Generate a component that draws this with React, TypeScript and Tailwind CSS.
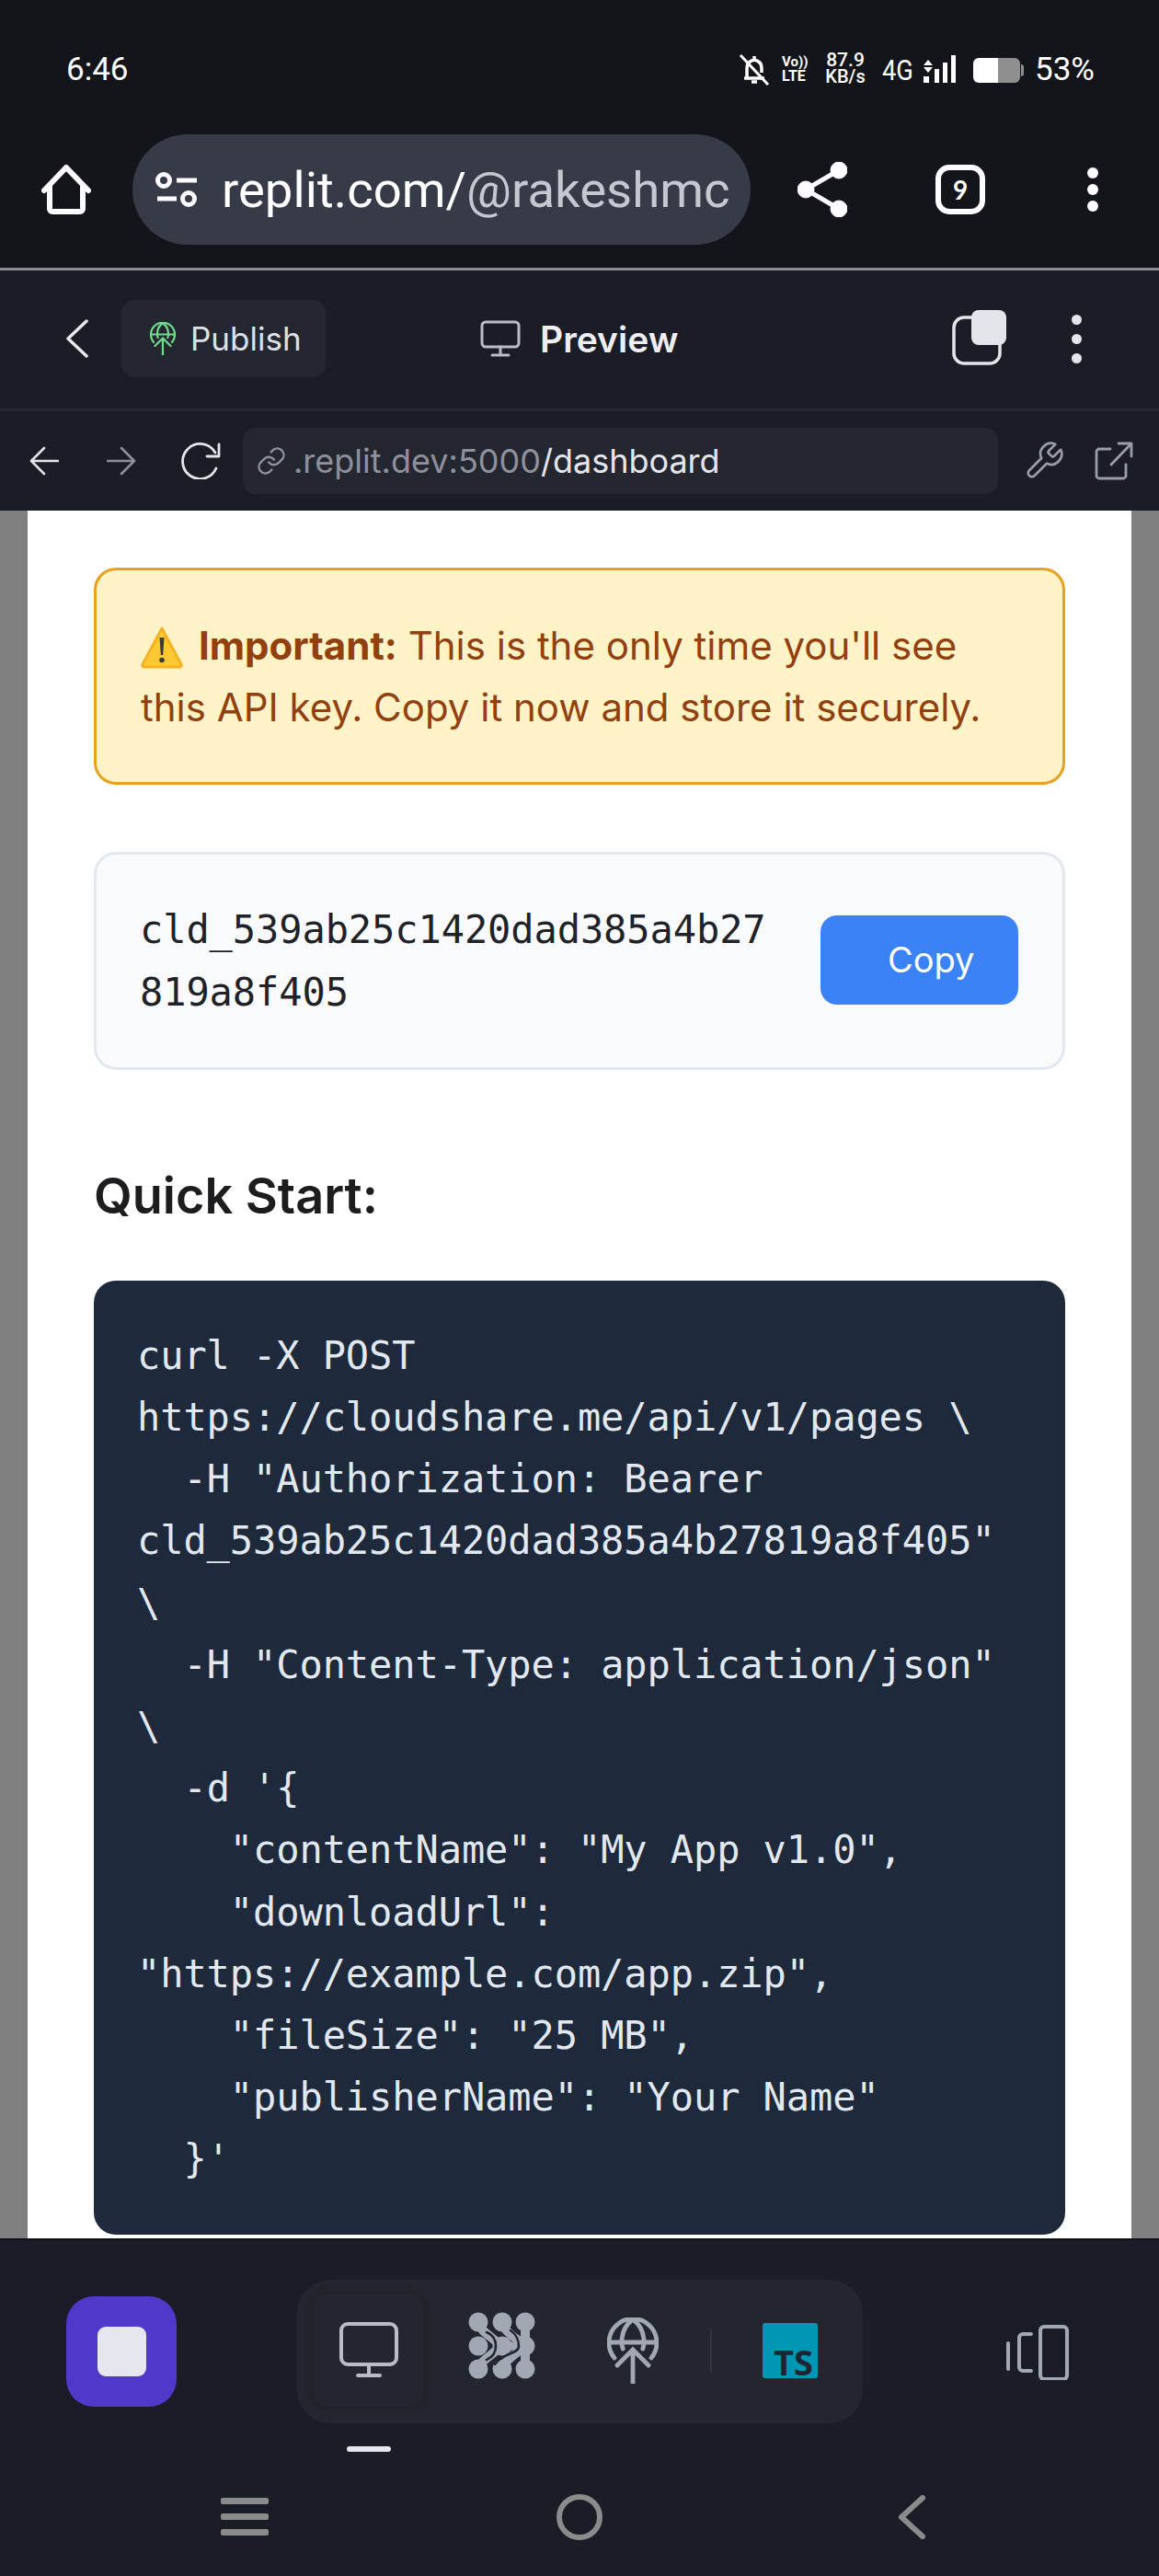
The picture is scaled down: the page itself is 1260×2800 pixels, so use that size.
const INTER = "font-['Inter','Liberation_Sans',sans-serif]";

const CODE = `curl -X POST https://cloudshare.me/api/v1/pages \\
  -H "Authorization: Bearer cld_539ab25c1420dad385a4b27819a8f405" \\
  -H "Content-Type: application/json" \\
  -d '{
    "contentName": "My App v1.0",
    "downloadUrl": "https://example.com/app.zip",
    "fileSize": "25 MB",
    "publisherName": "Your Name"
  }'`;

function StatusBar() {
  return (
    <div className="flex h-[145px] items-start pl-[72px] pt-[56px] font-['Roboto',sans-serif] text-white">
      <span className="mt-[1px] w-[70px] text-[35px] leading-[38px]">6:46</span>
      <svg viewBox="0 0 34 36" className="ml-[661px] mt-[2px] h-[36px] w-[34px]" fill="none" stroke="#fff" strokeWidth="3.5">
        <path d="M6 27h22M9 27V16c0-5 3-8 8-9 5 1 8 4 8 9v5M17 3v3M14 31h6" />
        <path d="M2 2l30 32" strokeWidth="3" />
      </svg>
      <div className="ml-[13px] mt-[3px] flex w-[30px] flex-col font-bold">
        <span className="text-[15px] leading-[16px]">Vo))</span>
        <span className="text-[16px] leading-[15px]">LTE</span>
      </div>
      <div className="ml-[16px] flex w-[46px] flex-col items-center text-[21px] font-medium leading-[18px]">
        <span>87.9</span>
        <span className="text-[20px]">KB/s</span>
      </div>
      <span className="ml-[17px] mt-[2px] w-[35px] origin-left scale-x-[0.85] text-[32px] leading-[36px]">4G</span>
      <svg viewBox="0 0 36 32" className="ml-[9px] mt-[3px] h-[32px] w-[36px]" fill="#fff">
        <path d="M6 6l5 6H1zM6 20l-5-6h10z" />
        <rect x="1" y="24" width="6" height="7" />
        <rect x="13" y="16" width="5" height="15" />
        <rect x="22" y="9" width="5" height="22" />
        <rect x="31" y="1" width="5" height="30" />
      </svg>
      <div className="ml-[19px] mt-[7px] flex h-[27px] w-[51px] overflow-hidden rounded-[6px]">
        <div className="w-[27px] bg-white" />
        <div className="flex-1 bg-[#8f8f8f]" />
      </div>
      <div className="ml-[1px] mt-[14px] h-[13px] w-[3px] rounded-r-sm bg-[#8f8f8f]" />
      <span className="ml-[12px] mt-[2px] text-[35px] leading-[36px]">53%</span>
    </div>
  );
}

function ChromeRow() {
  return (
    <div className="flex h-[146px] items-center pb-[24px] text-white">
      <svg viewBox="0 0 54 54" className="ml-[45px] h-[54px] w-[54px]" fill="none" stroke="#fdfbff" strokeWidth="6" strokeLinecap="round" strokeLinejoin="round">
        <path d="M3 28L27 3l24 25" />
        <path d="M9 24v24a3 3 0 0 0 3 3h30a3 3 0 0 0 3-3V24" />
      </svg>
      <div className="ml-[45px] flex h-[120px] w-[672px] items-center overflow-hidden rounded-[60px] bg-[#373a47] pl-[25px]">
        <svg viewBox="0 0 46 38" className="h-[38px] w-[46px] shrink-0" fill="none" stroke="#fdfbff" strokeWidth="5">
          <circle cx="9" cy="9" r="6.5" />
          <circle cx="36" cy="29" r="6.5" />
          <path d="M23 9h22M2 29h21" />
        </svg>
        <div className="ml-[26px] w-[555px] overflow-hidden whitespace-nowrap font-['Roboto',sans-serif] text-[54.5px] leading-[70px]">
          replit.com/<span className="text-[#c6c8d1]">@rakeshmc</span>
        </div>
      </div>
      <svg viewBox="0 0 54 60" className="ml-[51px] h-[60px] w-[54px]" fill="#fdfbff" stroke="#fdfbff">
        <path d="M45 9L9 30l36 21" fill="none" strokeWidth="5" />
        <circle cx="45" cy="9" r="9" />
        <circle cx="9" cy="30" r="9" />
        <circle cx="45" cy="51" r="9" />
      </svg>
      <div className="ml-[96px] flex h-[54px] w-[54px] items-center justify-center rounded-[15px] border-[6px] border-[#fdfbff] font-['Lato',sans-serif] text-[28px] font-bold leading-none">
        9
      </div>
      <Dots className="ml-[111px]" size={12} gap={6} color="bg-[#fdfbff]" />
    </div>
  );
}

function Dots({ className, size, gap, color }: { className: string; size: number; gap: number; color: string }) {
  return (
    <div className={`flex flex-col ${className}`} style={{ gap }}>
      {[0, 1, 2].map((i) => (
        <div key={i} className={`rounded-full ${color}`} style={{ width: size, height: size }} />
      ))}
    </div>
  );
}

function ReplitHeader() {
  return (
    <div className={`flex h-[150px] items-center pb-[2px] text-[#e8e8ee] ${INTER}`}>
      <svg viewBox="0 0 24 42" className="ml-[72px] h-[42px] w-[24px]" fill="none" stroke="#e8e8ee" strokeWidth="3.5" strokeLinecap="round" strokeLinejoin="round">
        <path d="M22 2L2 21l20 19" />
      </svg>
      <div className="ml-[36px] flex h-[84px] w-[222px] items-center rounded-[14px] bg-[#24272f] pl-[31px]">
        <GlobeUp className="h-[36px] w-[28px]" color="#6fdc8c" width={2.2} />
        <span className="ml-[16px] text-[35px] leading-none text-[#dfe0e6]">Publish</span>
      </div>
      <svg viewBox="0 0 44 40" className="ml-[168px] h-[40px] w-[44px]" fill="none" stroke="#b9bcc6" strokeWidth="3" strokeLinecap="round">
        <rect x="2" y="2" width="40" height="27" rx="4" />
        <path d="M22 29v8M13 38h18" />
      </svg>
      <span className="ml-[21px] text-[39px] font-semibold leading-none text-[#eeeef3]">Preview</span>
      <svg viewBox="0 0 60 60" className="ml-[298px] mt-[-2px] h-[60px] w-[60px]" fill="none">
        <rect x="2" y="8" width="50" height="50" rx="11" stroke="#e4e5ea" strokeWidth="3.5" />
        <rect x="21" y="0" width="38" height="38" rx="8" fill="#e4e5ea" />
      </svg>
      <Dots className="ml-[70px]" size={11} gap={10} color="bg-[#e4e5ea]" />
    </div>
  );
}

function GlobeUp({ className, color, width }: { className: string; color: string; width: number }) {
  return (
    <svg viewBox="0 0 28 36" className={className} fill="none" stroke={color} strokeWidth={width} strokeLinecap="round">
      <path d="M4 22a13 13 0 1 1 20 0" />
      <path d="M1 13.500h26M14 1c-4 3-6 7.500-6 12 0 1.500.2 3 .6 4M14 1c4 3 6 7.500 6 12 0 1.500-.2 3-.6 4" />
      <path d="M14 35.500V17.500M5.500 26l8.500-8.500 8.500 8.500" />
    </svg>
  );
}

function UrlRow() {
  return (
    <div className={`flex h-[108px] items-center ${INTER}`}>
      <svg viewBox="0 0 32 32" className="ml-[32px] h-[32px] w-[32px]" fill="none" stroke="#e4e5ea" strokeWidth="2.6" strokeLinecap="round" strokeLinejoin="round">
        <path d="M31 16H2M16 2L2 16l14 14" />
      </svg>
      <svg viewBox="0 0 32 32" className="ml-[52px] h-[32px] w-[32px]" fill="none" stroke="#8d909b" strokeWidth="2.6" strokeLinecap="round" strokeLinejoin="round">
        <path d="M1 16h29M16 2l14 14-14 14" />
      </svg>
      <svg viewBox="0 0 44 40" className="ml-[48px] h-[40px] w-[44px]" fill="none" stroke="#e4e5ea" strokeWidth="2.8" strokeLinecap="round" strokeLinejoin="round">
        <path d="M39 28a19 19 0 1 1-1-17" />
        <path d="M42 2v13H29" />
      </svg>
      <div className="ml-[24px] flex h-[72px] w-[821px] items-center rounded-[14px] bg-[#24272f] pl-[14px]">
        <svg viewBox="0 0 24 24" className="h-[34px] w-[34px]" fill="none" stroke="#8d909b" strokeWidth="1.7" strokeLinecap="round" strokeLinejoin="round">
          <path d="M10 13a5 5 0 0 0 7.500.5l3-3a5 5 0 0 0-7-7l-1.700 1.700" />
          <path d="M14 11a5 5 0 0 0-7.500-.5l-3 3a5 5 0 0 0 7 7l1.700-1.700" />
        </svg>
        <span className="ml-[7px] text-[36px] leading-none text-[#8e919d]">
          .replit.dev:5000<span className="text-[#e5e5ec]">/dashboard</span>
        </span>
      </div>
      <svg viewBox="0 0 24 24" className="ml-[27px] h-[46px] w-[46px]" fill="none" stroke="#9a9da8" strokeWidth="1.400" strokeLinecap="round" strokeLinejoin="round">
        <path d="M14.700 6.300a1 1 0 0 0 0 1.400l1.600 1.600a1 1 0 0 0 1.400 0l3.770-3.770a6 6 0 0 1-7.940 7.940l-6.910 6.910a2.120 2.120 0 0 1-3-3l6.910-6.910a6 6 0 0 1 7.940-7.940l-3.760 3.760z" />
      </svg>
      <svg viewBox="0 0 42 42" className="ml-[32px] h-[42px] w-[42px]" fill="none" stroke="#9a9da8" strokeWidth="2.800" strokeLinecap="round" strokeLinejoin="round">
        <path d="M17 8H5a3 3 0 0 0-3 3v26a3 3 0 0 0 3 3h26a3 3 0 0 0 3-3V25" />
        <path d="M18 25L40 2M26 2h14v14" />
      </svg>
    </div>
  );
}

function WarningIcon() {
  return (
    <svg viewBox="0 0 46 47" className="mr-[17px] inline-block h-[47px] w-[46px] align-[-10px]">
      <path d="M23 3L44 42a2 2 0 0 1-2 3H4a2 2 0 0 1-2-3z" fill="#fdc932" stroke="#f3b324" strokeWidth="3" strokeLinejoin="round" />
      <path d="M20.500 13h5l-1.300 19h-2.400z" fill="#3b3b3b" />
      <circle cx="23" cy="37.500" r="2.800" fill="#3b3b3b" />
    </svg>
  );
}

function Content() {
  return (
    <div className="h-[1878px] overflow-hidden bg-[#808080] px-[30px]">
      <div className={`h-full bg-white px-[72px] pt-[62px] ${INTER}`}>
        <div className="rounded-[24px] border-[3px] border-[#e8a11f] bg-[#fef3c7] p-[48px] text-[42px] leading-[67.2px] text-[#92400e]">
          <WarningIcon />
          <strong className="font-bold">Important:</strong> This is the only time you'll see this API key. Copy it now and store it securely.
        </div>

        <div className="mt-[73px] flex items-center gap-[48px] rounded-[24px] border-[3px] border-[#e2e8f0] bg-[#f8fafc] py-[48px] pl-[47px] pr-[48px]">
          <div className="min-w-0 flex-1 break-all font-['DejaVu_Sans_Mono',monospace] text-[42px] leading-[67.2px] tracking-[-0.08px] text-[#1f2328]">
            cld_539ab25c1420dad385a4b27819a8f405
          </div>
          <button className="mb-[2px] h-[97px] w-[215px] shrink-0 rounded-[18px] bg-[#3b82f6] pl-[73px] text-left text-[38px] text-white">
            Copy
          </button>
        </div>

        <h3 className="mb-[49px] mt-[94px] text-[54px] font-semibold leading-[86px] text-[#1d1d1f]">Quick Start:</h3>

        <pre className="whitespace-pre-wrap rounded-[24px] bg-[#1e293b] py-[48px] pl-[47px] pr-[48px] font-['DejaVu_Sans_Mono',monospace] text-[42px] leading-[67.2px] tracking-[-0.08px] text-[#e2e8f0]">
          {CODE}
        </pre>
      </div>
    </div>
  );
}

function DotsLogo() {
  const c = [11, 37, 62];
  return (
    <svg viewBox="0 0 84 84" className="ml-[49px] h-[84px] w-[84px]" fill="#a1a8b3">
      {c.map((x) => c.map((y) => <circle key={`${x}-${y}`} cx={x} cy={y} r="10.500" />))}
      <g fill="none" stroke="#a1a8b3" strokeWidth="10">
        <path d="M11 11c3 12 14 14 24 26C25 49 14 51 11 63" />
        <path d="M37 11c3 12 12 14 24 26C49 49 40 51 37 63" />
        <path d="M62 11v52" />
      </g>
      <path d="M30 30l22 7-22 7z" stroke="#a1a8b3" strokeWidth="6" strokeLinejoin="round" />
      <path d="M20 22c7 3 10 9 10 15s-3 12-10 15" fill="none" stroke="#23262e" strokeWidth="2.600" strokeLinecap="round" />
      <path d="M46 20c6 4 9 11 9 17 0 6-7 7-11 9-6 3-11 5-15 11" fill="none" stroke="#23262e" strokeWidth="2.600" strokeLinecap="round" />
    </svg>
  );
}

function BottomBar() {
  return (
    <div className="flex h-[367px] flex-col border-t-2 border-[#101114] bg-[#1a1d26]">
      <div className="flex h-[201px] items-start pl-[72px] pt-[43px]">
        <div className="mt-[18px] flex h-[120px] w-[120px] items-center justify-center rounded-[30px] bg-[#5038cb]">
          <div className="h-[54px] w-[53px] rounded-[9px] bg-[#e6e6ee]" />
        </div>
        <div className="ml-[131px] flex h-[156px] w-[615px] items-start rounded-[36px] bg-[#23262e] pl-[18px] pt-[15px]">
          <div className="flex h-[123px] w-[119px] items-center justify-center rounded-[16px] bg-[#23262e] shadow-[0_0_10px_rgba(20,18,22,0.3)]">
            <svg viewBox="0 0 64 60" className="mb-[2px] h-[60px] w-[64px]" fill="none" stroke="#b9bcc6" strokeWidth="4" strokeLinecap="round">
              <rect x="2" y="2" width="60" height="44" rx="7" />
              <path d="M32 46v12M20 58h24" />
            </svg>
          </div>
          <div className="flex h-[123px] items-center">
            <DotsLogo />
            <GlobeUp className="ml-[67px] h-[72px] w-[56px]" color="#a1a8b3" width={2.4} />
            <div className="ml-[56px] h-[48px] w-[2px] bg-[#31343e]" />
            <div className="ml-[55px] flex h-[60px] w-[60px] items-end justify-end rounded-[3px] bg-[#0097b5] pb-[1px] pr-[5px] font-['Open_Sans',sans-serif] text-[38px] font-bold leading-[34px] text-[#1d2533]">
              TS
            </div>
          </div>
        </div>
        <svg viewBox="0 0 68 60" className="ml-[156px] mt-[49px] h-[60px] w-[68px]" fill="none" stroke="#a1a8b3" strokeWidth="4" strokeLinecap="round" strokeLinejoin="round">
          <path d="M2 20v28" />
          <path d="M27 10h-9a4 4 0 0 0-4 4v32a4 4 0 0 0 4 4h9" />
          <rect x="37" y="2" width="29" height="57" rx="4" />
        </svg>
      </div>
      <div className="ml-[377px] mt-[23px] h-[6px] w-[48px] rounded-[3px] bg-[#e6e6ee]" />
      <div className="flex flex-1 items-center pt-[6px]">
        <div className="ml-[240px] flex w-[52px] flex-col gap-[10px]">
          <div className="h-[7px] rounded-[2px] bg-[#8b8b8b]" />
          <div className="h-[7px] rounded-[2px] bg-[#8b8b8b]" />
          <div className="h-[7px] rounded-[2px] bg-[#8b8b8b]" />
        </div>
        <div className="ml-[313px] h-[50px] w-[50px] rounded-full border-[6px] border-[#8b8b8b]" />
        <svg viewBox="0 0 30 48" className="ml-[321px] h-[48px] w-[30px]" fill="none" stroke="#8b8b8b" strokeWidth="6" strokeLinecap="round" strokeLinejoin="round">
          <path d="M27 3L4 24l23 21" />
        </svg>
      </div>
    </div>
  );
}

export default function App() {
  return (
    <div className="flex h-[2800px] w-[1260px] flex-col overflow-hidden">
      <div className="bg-[#14151a]">
        <StatusBar />
        <ChromeRow />
      </div>
      <div className="h-[3px] bg-[#8b8b93]" />
      <div className="bg-[#1a1d26]">
        <ReplitHeader />
        <div className="h-[3px] bg-[#252833]" />
        <UrlRow />
      </div>
      <Content />
      <BottomBar />
    </div>
  );
}
